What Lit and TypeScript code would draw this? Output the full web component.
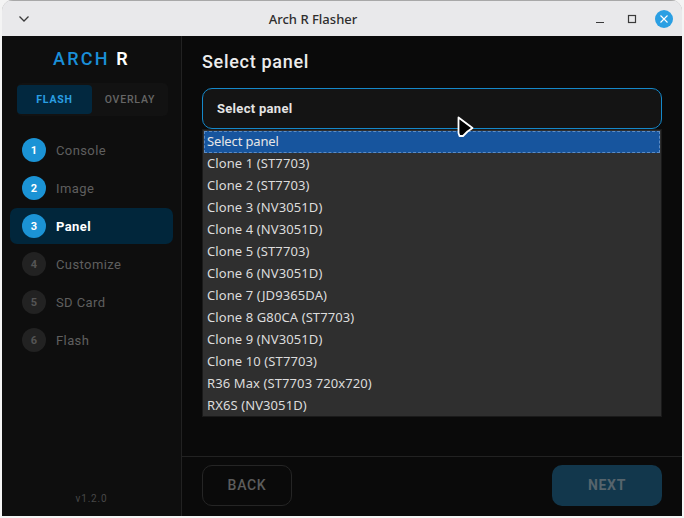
import { LitElement, html, css } from "lit";
import { customElement } from "lit/decorators.js";

const STEPS = ["Console", "Image", "Panel", "Customize", "SD Card", "Flash"];
const OPTIONS = [
  "Select panel", "Clone 1 (ST7703)", "Clone 2 (ST7703)", "Clone 3 (NV3051D)", "Clone 4 (NV3051D)",
  "Clone 5 (ST7703)", "Clone 6 (NV3051D)", "Clone 7 (JD9365DA)", "Clone 8 G80CA (ST7703)",
  "Clone 9 (NV3051D)", "Clone 10 (ST7703)", "R36 Max (ST7703 720x720)", "RX6S (NV3051D)",
];

@customElement("app-root")
export class AppRoot extends LitElement {
  static styles = css`
    :host { display: block; width: 684px; height: 518px; background: #f4f4f4; font-family: "Roboto", "Liberation Sans", sans-serif; }
    .window { width: 684px; height: 518px; box-sizing: border-box; padding: 0 2px 2px 2px; }
    .frame { position: relative; height: 100%; display: flex; flex-direction: column; border-radius: 11px 11px 0 0; overflow: hidden; box-shadow: inset 0 0 0 1px #a8a8a8; }
    .titlebar { height: 36px; flex: none; background: #e9e9eb; display: flex; align-items: center; padding: 0 9px 0 16px; color: #333; border-top: 1px solid #a8a8a8; box-sizing: border-box; }
    .titlebar .title { flex: 1; text-align: center; font: 500 13px "Noto Sans", "Open Sans", sans-serif; color: #2e2e2e; padding-left: 1px; }
    .wm { display: flex; align-items: center; gap: 17px; }
    .wm svg { display: block; }
    .close { width: 18px; height: 18px; border-radius: 50%; background: #2a9fe3; display: flex; align-items: center; justify-content: center; margin-left: 1px; }
    .body { flex: 1; display: flex; min-height: 0; }
    .side { width: 180px; flex: none; box-sizing: border-box; background: #0e0e0e; border-right: 1px solid #222; display: flex; flex-direction: column; padding: 0 8px 0 8px; }
    .logo { text-align: center; margin-top: 11px; height: 24px; line-height: 24px; font-size: 18px; font-weight: 500; letter-spacing: 2.2px; color: #1a8fd8; }
    .logo b { color: #fff; font-weight: 600; }
    .tabs { margin: 12px 5px 0 7px; height: 33px; background: #121212; border-radius: 5px; display: flex; box-sizing: border-box; padding: 2px 0; }
    .tab { flex: 1; display: flex; align-items: center; justify-content: center; font-size: 10.5px; letter-spacing: 0.8px; font-weight: 500; color: #666; border-radius: 4px; }
    .tab.on { flex: none; width: 75px; background: #02283f; color: #2a9fe3; font-weight: 700; }
    .steps { margin-top: 16px; display: flex; flex-direction: column; gap: 2px; }
    .step { height: 36px; display: flex; align-items: center; gap: 10px; padding-left: 12px; border-radius: 7px; color: #5f5f5f; font-size: 13px; letter-spacing: 0.4px; }
    .step.cur { background: #01263b; color: #fff; font-weight: 700; }
    .num { width: 24px; height: 24px; border-radius: 50%; background: #222; color: #555; display: flex; align-items: center; justify-content: center; font-size: 11px; font-weight: 700; }
    .num.done { background: #1b93d5; color: #fff; }
    .ver { margin-top: auto; text-align: center; font-size: 10px; letter-spacing: 0.8px; color: #484848; padding-bottom: 12px; }
    .main { flex: 1; position: relative; background: #0a0a0a; display: flex; flex-direction: column; min-width: 0; }
    .content { flex: 1; padding: 14px 20px 0 20px; }
    h1 { margin: 0; height: 24px; line-height: 24px; font-size: 18px; font-weight: 500; letter-spacing: 0.7px; color: #ececec; }
    .select { margin-top: 14px; height: 41px; box-sizing: border-box; border: 1px solid #1588c9; border-radius: 10px; background: #141414; display: flex; align-items: center; padding-left: 14px; font-size: 13px; font-weight: 700; letter-spacing: 0.3px; color: #e4e4e4; }
    .list { position: absolute; left: 20px; top: 93px; width: 460px; box-sizing: border-box; border: 1px solid #1a1a1a; background: #2f2f2f; padding: 1px 1px 0 1px; font: 13px "Noto Sans", "Open Sans", sans-serif; letter-spacing: 0.1px; color: #dcdcdc; height: 288px; }
    .opt { height: 22px; line-height: 21px; padding-left: 3px; box-sizing: border-box; white-space: nowrap; }
    .opt.sel { background: #17559e; outline: 1px dashed #5d8cc4; outline-offset: -1px; color: #e6e6e6; letter-spacing: -0.15px; }
    .cursor { position: absolute; left: 274px; top: 80px; display: block; }
    .foot { height: 60px; flex: none; box-sizing: border-box; border-top: 1px solid #222; padding: 8px 20px 0 20px; display: flex; justify-content: space-between; align-items: flex-start; }
    .btn { height: 41px; box-sizing: border-box; border-radius: 10px; display: flex; align-items: center; justify-content: center; padding-bottom: 2px; font-size: 14px; font-weight: 500; letter-spacing: 0.7px; color: #5c5c5c; }
    .back { width: 90px; border: 1px solid #252525; }
    .next { width: 110px; background: #12374c; color: #56646c; font-weight: 700; }
  `;

  render() {
    return html`<div class="window"><div class="frame">
      <div class="titlebar">
        <svg width="12" height="8" viewBox="0 0 12 8"><path d="M1.5 1.5 6 6l4.5-4.5" fill="none" stroke="#3a3a3a" stroke-width="1.3"/></svg>
        <div class="title">Arch R Flasher</div>
        <div class="wm">
          <svg width="10" height="10" viewBox="0 0 10 10"><path d="M1 8.5h8" stroke="#3a3a3a" stroke-width="1.2"/></svg>
          <svg width="10" height="10" viewBox="0 0 10 10" style="margin-left:5px"><rect x="1.5" y="1.5" width="7" height="7" fill="none" stroke="#3a3a3a" stroke-width="1.2"/></svg>
          <div class="close"><svg width="10" height="10" viewBox="0 0 10 10"><path d="M1.5 1.5l7 7m0-7l-7 7" stroke="#fff" stroke-width="1.1"/></svg></div>
        </div>
      </div>
      <div class="body">
        <aside class="side">
          <div class="logo">ARCH <b>R</b></div>
          <div class="tabs"><div class="tab on">FLASH</div><div class="tab">OVERLAY</div></div>
          <div class="steps">
            ${STEPS.map((s, i) => html`<div class="step ${i === 2 ? "cur" : ""}"><div class="num ${i < 3 ? "done" : ""}">${i + 1}</div>${s}</div>`)}
          </div>
          <div class="ver">v1.2.0</div>
        </aside>
        <main class="main">
          <div class="content">
            <h1>Select panel</h1>
            <div class="select">Select panel</div>
          </div>
          <div class="list">
            ${OPTIONS.map((o, i) => html`<div class="opt ${i === 0 ? "sel" : ""}">${o}</div>`)}
          </div>
          <svg class="cursor" width="20" height="23" viewBox="0 0 20 23"><path d="M2.5 1.5 16.5 12 11.5 15.5 7 20H3.5l-1-3z" fill="#000" stroke="#fff" stroke-width="1.8" stroke-linejoin="round"/></svg>
          <div class="foot"><div class="btn back">BACK</div><div class="btn next">NEXT</div></div>
        </main>
      </div>
    </div></div>`;
  }
}
